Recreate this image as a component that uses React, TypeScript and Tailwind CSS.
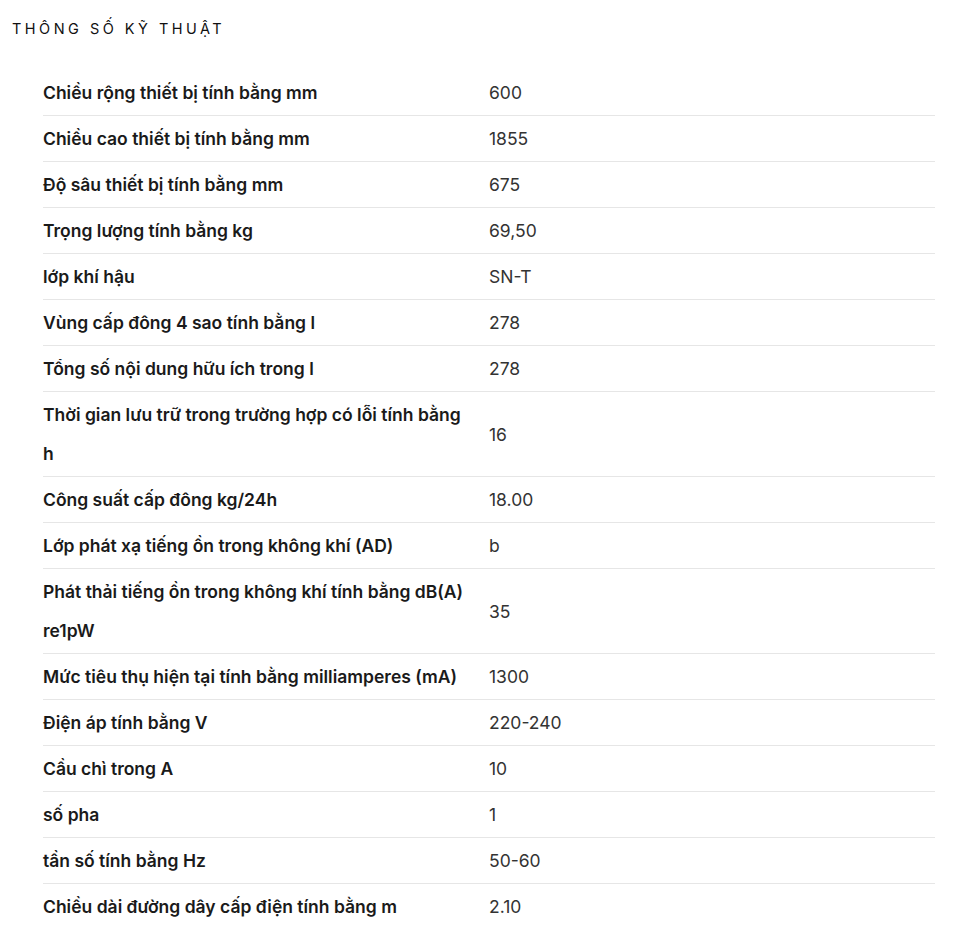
import React from 'react';

const specs: [string, string][] = [
  ['Chiều rộng thiết bị tính bằng mm', '600'],
  ['Chiều cao thiết bị tính bằng mm', '1855'],
  ['Độ sâu thiết bị tính bằng mm', '675'],
  ['Trọng lượng tính bằng kg', '69,50'],
  ['lớp khí hậu', 'SN-T'],
  ['Vùng cấp đông 4 sao tính bằng l', '278'],
  ['Tổng số nội dung hữu ích trong l', '278'],
  ['Thời gian lưu trữ trong trường hợp có lỗi tính bằng h', '16'],
  ['Công suất cấp đông kg/24h', '18.00'],
  ['Lớp phát xạ tiếng ồn trong không khí (AD)', 'b'],
  ['Phát thải tiếng ồn trong không khí tính bằng dB(A) re1pW', '35'],
  ['Mức tiêu thụ hiện tại tính bằng milliamperes (mA)', '1300'],
  ['Điện áp tính bằng V', '220-240'],
  ['Cầu chì trong A', '10'],
  ['số pha', '1'],
  ['tần số tính bằng Hz', '50-60'],
  ['Chiều dài đường dây cấp điện tính bằng m', '2.10'],
];

export default function App() {
  return (
    <div className="bg-white w-[975px] h-[928px] overflow-hidden" style={{ fontFamily: 'Inter, "Noto Sans", sans-serif' }}>
      <h2 className="pl-3 pt-[20px] text-[14.5px] leading-[18px] tracking-[0.24em] text-[#111] font-normal">
        THÔNG SỐ KỸ THUẬT
      </h2>
      <table className="ml-[43px] mt-[32px] w-[892px] border-collapse table-fixed">
        <tbody>
          {specs.map(([label, value], i) => (
            <tr key={label} className={i < specs.length - 1 ? 'border-b border-[#e6e6e6]' : ''}>
              <td className="w-1/2 py-[3px] pr-[20px] align-middle text-[17.5px] leading-[39px] font-semibold text-[#1a1a1a]">
                {label}
              </td>
              <td className="w-1/2 py-[3px] align-middle text-[17.5px] leading-[39px] text-[#333]">
                {value}
              </td>
            </tr>
          ))}
        </tbody>
      </table>
    </div>
  );
}
